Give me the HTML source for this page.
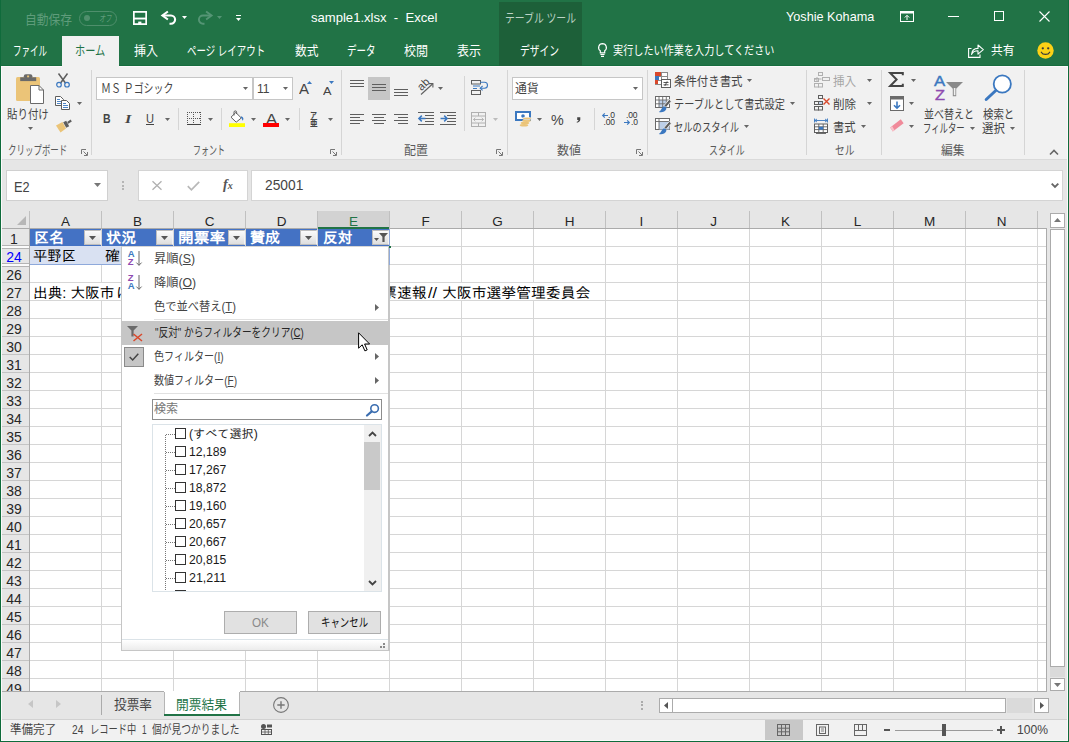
<!DOCTYPE html>
<html lang="ja"><head><meta charset="utf-8"><title>sample1.xlsx - Excel</title>
<style>
html,body{margin:0;padding:0}
body{width:1069px;height:742px;position:relative;overflow:hidden;background:#e6e6e6;font-family:'Liberation Sans','Noto Sans CJK JP',sans-serif;font-size:12px;color:#262626}
div{position:absolute;box-sizing:border-box;white-space:nowrap}
svg{position:absolute;overflow:visible}
u{text-decoration:underline;text-underline-offset:1px}
</style></head><body>

<div style="left:0px;top:0px;width:1069px;height:66px;background:#217346;"></div>
<div style="left:499px;top:2px;width:83px;height:64px;background:#1d6039;"></div>
<div style="left:24.5px;top:11.2px;color:#5f9c7b;font-size:13px;line-height:17px;transform-origin:0 0;transform:scaleX(0.9036);">自動保存</div>
<div style="left:79px;top:11px;width:38px;height:15px;border:1px solid #4f8f6c;border-radius:8px"></div>
<div style="left:84px;top:15px;width:6px;height:6px;background:#4f8f6c;border-radius:3px"></div>
<div style="left:98.5px;top:12.3px;color:#5f9c7b;font-size:10px;line-height:14px;font-style:italic;transform-origin:0 0;transform:scaleX(0.6250);">オフ</div>
<svg style="left:133px;top:11px" width="14" height="14" viewBox="0 0 14 14"><path d="M0.85 0.85H13.15V13.15H0.85Z" fill="none" stroke="#fff" stroke-width="1.7"/><rect x="1" y="6.6" width="12" height="1.9" fill="#fff"/><rect x="5.2" y="10.6" width="3.2" height="3" fill="#fff"/></svg>
<svg style="left:161px;top:11px" width="16" height="14" viewBox="0 0 16 14"><path d="M2 4.5H10A4.1 4.1 0 0 1 10 12.7H8.5" fill="none" stroke="#fff" stroke-width="2.1"/><path d="M6.9 0.5L1.4 4.5L6.9 8.5" fill="none" stroke="#fff" stroke-width="2.1"/></svg>
<svg style="left:182px;top:16px" width="5" height="3" viewBox="0 0 5 3"><path d="M0 0H5L2.5 3Z" fill="#fff"/></svg>
<svg style="left:196.5px;top:11px" width="16" height="14" viewBox="0 0 16 14"><path d="M14 4.5H6A4.1 4.1 0 0 0 6 12.7H7.5" fill="none" stroke="#559575" stroke-width="1.9"/><path d="M9.1 0.5L14.6 4.5L9.1 8.5" fill="none" stroke="#559575" stroke-width="1.9"/></svg>
<svg style="left:217px;top:16px" width="5" height="3" viewBox="0 0 5 3"><path d="M0 0H5L2.5 3Z" fill="#559575"/></svg>
<div style="left:236px;top:15px;width:5px;height:1px;background:#fff;"></div>
<svg style="left:236px;top:18px" width="5" height="3" viewBox="0 0 5 3"><path d="M0 0H5L2.5 3Z" fill="#fff"/></svg>
<div style="left:310.6px;top:9px;color:#fff;font-size:13px;line-height:17px;transform-origin:0 0;transform:scaleX(1.0055);">sample1.xlsx&nbsp; -&nbsp; Excel</div>
<div style="left:504.5px;top:11.25px;color:#bcd3c5;font-size:12.5px;line-height:16.5px;transform-origin:0 0;transform:scaleX(0.7868);">テーブル ツール</div>
<div style="left:785.7px;top:7.55px;color:#fff;font-size:13.5px;line-height:17.5px;transform-origin:0 0;transform:scaleX(0.9386);">Yoshie Kohama</div>
<svg style="left:899.5px;top:11px" width="14" height="11" viewBox="0 0 14 11"><rect x="0.5" y="0.5" width="13" height="10" fill="none" stroke="#fff"/><rect x="0.5" y="0.5" width="13" height="2" fill="#fff"/><path d="M7 4.5V9M4.8 6.5L7 4.3L9.2 6.5" fill="none" stroke="#fff"/></svg>
<div style="left:947.5px;top:16px;width:11px;height:1px;background:#fff;"></div>
<div style="left:994px;top:11px;width:10px;height:10px;border:1px solid #fff"></div>
<svg style="left:1039px;top:11px" width="11" height="11" viewBox="0 0 11 11"><path d="M0.5 0.5L10.5 10.5M10.5 0.5L0.5 10.5" stroke="#fff" stroke-width="1.1"/></svg>
<div style="left:62px;top:36px;width:57px;height:30px;background:#f1f1f1;"></div>
<div style="left:12.6px;top:42.1px;color:#fff;font-size:13px;line-height:17px;transform-origin:0 0;transform:scaleX(0.6556);">ファイル</div>
<div style="left:74.5px;top:42.1px;color:#217346;font-size:13px;line-height:17px;transform-origin:0 0;transform:scaleX(0.7845);">ホーム</div>
<div style="left:133.8px;top:42.1px;color:#fff;font-size:13px;line-height:17px;transform-origin:0 0;transform:scaleX(0.9225);">挿入</div>
<div style="left:186.9px;top:42.1px;color:#fff;font-size:13px;line-height:17px;transform-origin:0 0;transform:scaleX(0.7275);">ページ レイアウト</div>
<div style="left:294.5px;top:42.1px;color:#fff;font-size:13px;line-height:17px;transform-origin:0 0;transform:scaleX(0.9033);">数式</div>
<div style="left:346.5px;top:42.1px;color:#fff;font-size:13px;line-height:17px;transform-origin:0 0;transform:scaleX(0.7305);">データ</div>
<div style="left:404px;top:42.1px;color:#fff;font-size:13px;line-height:17px;transform-origin:0 0;transform:scaleX(0.9225);">校閲</div>
<div style="left:457px;top:42.1px;color:#fff;font-size:13px;line-height:17px;transform-origin:0 0;transform:scaleX(0.9225);">表示</div>
<div style="left:520px;top:42.1px;color:#fff;font-size:13px;line-height:17px;transform-origin:0 0;transform:scaleX(0.7498);">デザイン</div>
<svg style="left:597.5px;top:43px" width="9" height="14" viewBox="0 0 9 14"><path d="M4.5 0.6A3.9 3.9 0 0 0 2.3 7.7V9.8H6.7V7.7A3.9 3.9 0 0 0 4.5 0.6Z" fill="none" stroke="#fff" stroke-width="1.2"/><path d="M2.4 11.5H6.6M3 13.3H6" stroke="#fff" stroke-width="1.2"/></svg>
<div style="left:613px;top:43px;color:#fff;font-size:12px;line-height:16px;transform-origin:0 0;transform:scaleX(0.8442);">実行したい作業を入力してください</div>
<svg style="left:967.5px;top:43.5px" width="16" height="14" viewBox="0 0 16 14"><path d="M3.5 4.5H0.6V13.4H12V10.5" fill="none" stroke="#fff" stroke-width="1.1"/><path d="M3.5 10.5C3.8 6.5 6.5 4.4 10 4.4V1L15.3 5.6L10 10.2V6.8C7 6.8 4.8 7.8 3.5 10.5Z" fill="none" stroke="#fff" stroke-width="1.1" stroke-linejoin="round"/></svg>
<div style="left:991px;top:42.75px;color:#fff;font-size:12.5px;line-height:16.5px;transform-origin:0 0;transform:scaleX(0.9434);">共有</div>
<svg style="left:1036.5px;top:42px" width="17" height="17" viewBox="0 0 17 17"><circle cx="8.5" cy="8.5" r="8.2" fill="#fcd116"/><circle cx="5.8" cy="6.3" r="1.15" fill="#3a3a3a"/><circle cx="11.2" cy="6.3" r="1.15" fill="#3a3a3a"/><path d="M4.3 10.2C5.8 13.2 11.2 13.2 12.7 10.2" fill="none" stroke="#3a3a3a" stroke-width="1.2" stroke-linecap="round"/></svg>
<div style="left:1px;top:66px;width:1066px;height:93px;background:#f1f1f1;"></div>
<div style="left:1px;top:159px;width:1066px;height:1px;background:#dadada;"></div>
<div style="left:91.3px;top:70px;width:1px;height:85px;background:#d5d5d5;"></div>
<div style="left:341.3px;top:70px;width:1px;height:85px;background:#d5d5d5;"></div>
<div style="left:507.2px;top:70px;width:1px;height:85px;background:#d5d5d5;"></div>
<div style="left:647.3px;top:70px;width:1px;height:85px;background:#d5d5d5;"></div>
<div style="left:806.2px;top:70px;width:1px;height:85px;background:#d5d5d5;"></div>
<div style="left:881.3px;top:70px;width:1px;height:85px;background:#d5d5d5;"></div>
<div style="left:1023.8px;top:70px;width:1px;height:85px;background:#d5d5d5;"></div>
<div style="left:8px;top:143.45px;color:#5a5a5a;font-size:12.5px;line-height:16.5px;transform-origin:0 0;transform:scaleX(0.6776);">クリップボード</div>
<div style="left:192.7px;top:143.45px;color:#5a5a5a;font-size:12.5px;line-height:16.5px;transform-origin:0 0;transform:scaleX(0.6398);">フォント</div>
<div style="left:404px;top:143.45px;color:#5a5a5a;font-size:12.5px;line-height:16.5px;transform-origin:0 0;transform:scaleX(0.9594);">配置</div>
<div style="left:557px;top:143.45px;color:#5a5a5a;font-size:12.5px;line-height:16.5px;transform-origin:0 0;transform:scaleX(0.9594);">数値</div>
<div style="left:709px;top:143.45px;color:#5a5a5a;font-size:12.5px;line-height:16.5px;transform-origin:0 0;transform:scaleX(0.7138);">スタイル</div>
<div style="left:834.5px;top:143.45px;color:#5a5a5a;font-size:12.5px;line-height:16.5px;transform-origin:0 0;transform:scaleX(0.7795);">セル</div>
<div style="left:941px;top:143.45px;color:#5a5a5a;font-size:12.5px;line-height:16.5px;transform-origin:0 0;transform:scaleX(0.9434);">編集</div>
<svg style="left:80.5px;top:148.5px" width="7" height="7" viewBox="0 0 7 7"><path d="M0.5 5V0.5H5" fill="none" stroke="#777"/><path d="M2.5 2.5L6 6M6.5 3V6.5H3" fill="none" stroke="#777"/></svg>
<svg style="left:330px;top:148.5px" width="7" height="7" viewBox="0 0 7 7"><path d="M0.5 5V0.5H5" fill="none" stroke="#777"/><path d="M2.5 2.5L6 6M6.5 3V6.5H3" fill="none" stroke="#777"/></svg>
<svg style="left:496px;top:148.5px" width="7" height="7" viewBox="0 0 7 7"><path d="M0.5 5V0.5H5" fill="none" stroke="#777"/><path d="M2.5 2.5L6 6M6.5 3V6.5H3" fill="none" stroke="#777"/></svg>
<svg style="left:636px;top:148.5px" width="7" height="7" viewBox="0 0 7 7"><path d="M0.5 5V0.5H5" fill="none" stroke="#777"/><path d="M2.5 2.5L6 6M6.5 3V6.5H3" fill="none" stroke="#777"/></svg>
<svg style="left:1049px;top:148.5px" width="10" height="6" viewBox="0 0 10 6"><path d="M1 5.5L5 1.5L9 5.5" fill="none" stroke="#666" stroke-width="1.6"/></svg>
<svg style="left:16px;top:74px" width="28" height="30" viewBox="0 0 28 30"><rect x="0" y="3" width="24" height="24" rx="1.5" fill="#ebc478"/><rect x="4.2" y="3.3" width="16" height="3.8" fill="#6a6a6a"/><rect x="7.8" y="0.3" width="8.6" height="4" rx="2" fill="#6a6a6a"/><rect x="11.1" y="1.5" width="2" height="1.8" fill="#ebc478"/><path d="M14.5 11.5H23L27.5 16V29.5H14.5Z" fill="#fff" stroke="#6a6a6a"/><path d="M23 11.5V16H27.5" fill="none" stroke="#6a6a6a"/></svg>
<div style="left:7px;top:107.45px;color:#444;font-size:12.5px;line-height:16.5px;transform-origin:0 0;transform:scaleX(0.8357);">貼り付け</div>
<svg style="left:28px;top:127px" width="5" height="3" viewBox="0 0 5 3"><path d="M0 0H5L2.5 3Z" fill="#666"/></svg>
<svg style="left:56px;top:72.5px" width="14" height="15" viewBox="0 0 14 15"><path d="M2.5 0.5L9.6 10.2M11.5 0.5L4.4 10.2" stroke="#5e5e5e" stroke-width="1.5" fill="none"/><circle cx="3" cy="11.7" r="2.3" fill="none" stroke="#3b78c0" stroke-width="1.2"/><circle cx="11" cy="11.7" r="2.3" fill="none" stroke="#3b78c0" stroke-width="1.2"/></svg>
<svg style="left:55px;top:96px" width="15" height="14" viewBox="0 0 15 14"><path d="M0.5 0.5H5.5L8.5 3.5V9.5H0.5Z" fill="#fff" stroke="#5e5e5e"/><path d="M2 3.5H5M2 5.5H6.5M2 7.5H6.5" stroke="#3b78c0" stroke-width="0.9"/><path d="M6.5 4.5H11.5L14.5 7.5V13.5H6.5Z" fill="#fff" stroke="#5e5e5e"/><path d="M8 7.5H11M8 9.5H13M8 11.5H13" stroke="#3b78c0" stroke-width="0.9"/></svg>
<svg style="left:77px;top:102px" width="5" height="3" viewBox="0 0 5 3"><path d="M0 0H5L2.5 3Z" fill="#666"/></svg>
<svg style="left:56px;top:119px" width="16" height="14" viewBox="0 0 16 14"><path d="M0 6.5L6.5 3L10 9.5L4.5 13.5Z" fill="#ebc478"/><path d="M7.2 3.3L10.2 1.7L13.2 7.2L10.2 8.8Z" fill="#5e5e5e"/><path d="M11.2 3L14.6 0.6L15.8 2.4L12.3 4.8Z" fill="#5e5e5e"/></svg>
<div style="left:96px;top:77px;width:157px;height:23px;background:#fff;border:1px solid #c6c6c6"></div>
<div style="left:100.5px;top:81.45px;color:#444;font-size:12.5px;line-height:16.5px;transform-origin:0 0;transform:scaleX(0.7968);">ＭＳ Ｐゴシック</div>
<svg style="left:243px;top:87px" width="5" height="3" viewBox="0 0 5 3"><path d="M0 0H5L2.5 3Z" fill="#666"/></svg>
<div style="left:253px;top:77px;width:40px;height:23px;background:#fff;border:1px solid #c6c6c6"></div>
<div style="left:256.7px;top:81.45px;color:#444;font-size:12.5px;line-height:16.5px;transform-origin:0 0;transform:scaleX(0.9704);">11</div>
<svg style="left:283px;top:87px" width="5" height="3" viewBox="0 0 5 3"><path d="M0 0H5L2.5 3Z" fill="#666"/></svg>
<div style="left:299px;top:81.2px;color:#444;font-size:14.5px;line-height:16px;transform-origin:0 0;transform:scaleX(1.0339);">A</div>
<svg style="left:307px;top:81px" width="5" height="3" viewBox="0 0 5 3"><path d="M0 3H5L2.5 0Z" fill="#3b78c0"/></svg>
<div style="left:322.5px;top:83.7px;color:#444;font-size:11.5px;line-height:14px;transform-origin:0 0;transform:scaleX(1.1079);">A</div>
<svg style="left:329px;top:81px" width="5" height="3" viewBox="0 0 5 3"><path d="M0 0H5L2.5 3Z" fill="#3b78c0"/></svg>
<div style="left:102.7px;top:110.2px;color:#444;font-size:13px;line-height:17px;font-weight:bold;transform-origin:0 0;transform:scaleX(0.8093);">B</div>
<div style="left:125px;top:110.2px;color:#444;font-size:13px;line-height:17px;font-style:italic;font-family:'Liberation Serif',serif;font-weight:bold;transform-origin:0 0;transform:scaleX(1.2444);">I</div>
<div style="left:146px;top:110.95px;color:#444;font-size:12.5px;line-height:16.5px;transform-origin:0 0;transform:scaleX(0.8858);">U</div>
<div style="left:146px;top:124px;width:8px;height:1px;background:#444;"></div>
<svg style="left:165px;top:118px" width="5" height="3" viewBox="0 0 5 3"><path d="M0 0H5L2.5 3Z" fill="#666"/></svg>
<div style="left:178px;top:108px;width:1px;height:22px;background:#d5d5d5;"></div>
<svg style="left:187px;top:112px" width="14" height="13" viewBox="0 0 14 13"><g shape-rendering="crispEdges" stroke="#555" stroke-dasharray="1 1" fill="none"><path d="M0 0.5H14M0 6.5H14M0.5 0V11M6.5 0V11M13.5 0V11"/></g><path d="M0 12.5H14" stroke="#444" stroke-width="1" shape-rendering="crispEdges"/></svg>
<svg style="left:208px;top:118px" width="5" height="3" viewBox="0 0 5 3"><path d="M0 0H5L2.5 3Z" fill="#666"/></svg>
<div style="left:221px;top:108px;width:1px;height:22px;background:#d5d5d5;"></div>
<svg style="left:229px;top:111px" width="16" height="16" viewBox="0 0 16 16"><path d="M6.8 1.5L12.3 7L7.2 11.2L2 6.2Z" fill="#fff" stroke="#5e5e5e" stroke-width="1"/><path d="M5 4.5V1.2A1.3 1.3 0 0 1 7.6 1.2V3" fill="none" stroke="#5e5e5e" stroke-width="1"/><path d="M12.6 5.2C14.6 6.3 15 8.2 13.6 9.8C13 8.3 12.8 7.2 11.5 6.3Z" fill="#3b78c0"/><rect x="0" y="12.2" width="16" height="3.8" fill="#ffff00"/></svg>
<svg style="left:251px;top:118px" width="5" height="3" viewBox="0 0 5 3"><path d="M0 0H5L2.5 3Z" fill="#666"/></svg>
<div style="left:265.5px;top:110.7px;color:#444;font-size:14px;line-height:16px;transform-origin:0 0;transform:scaleX(1.1773);">A</div>
<div style="left:263px;top:123px;width:16px;height:4px;background:#ff0000;"></div>
<svg style="left:285px;top:118px" width="5" height="3" viewBox="0 0 5 3"><path d="M0 0H5L2.5 3Z" fill="#666"/></svg>
<div style="left:298.5px;top:108px;width:1px;height:22px;background:#d5d5d5;"></div>
<div style="left:310px;top:110.8px;color:#444;font-size:8.5px;line-height:8px;font-weight:bold;transform-origin:0 0;transform:scaleX(0.8220);">ア</div>
<div style="left:309.7px;top:118.8px;color:#444;font-size:8.5px;line-height:8px;font-weight:bold;transform-origin:0 0;transform:scaleX(0.8925);">亜</div>
<svg style="left:328px;top:118px" width="5" height="3" viewBox="0 0 5 3"><path d="M0 0H5L2.5 3Z" fill="#666"/></svg>
<div style="left:350px;top:80px;width:14px;height:1px;background:#5e5e5e;"></div>
<div style="left:350px;top:83px;width:14px;height:1px;background:#5e5e5e;"></div>
<div style="left:350px;top:86px;width:14px;height:1px;background:#5e5e5e;"></div>
<div style="left:368px;top:77px;width:22px;height:23px;background:#c6c6c6;"></div>
<div style="left:372px;top:84px;width:14px;height:1px;background:#5e5e5e;"></div>
<div style="left:372px;top:87px;width:14px;height:1px;background:#5e5e5e;"></div>
<div style="left:372px;top:90px;width:14px;height:1px;background:#5e5e5e;"></div>
<div style="left:394px;top:89px;width:14px;height:1px;background:#5e5e5e;"></div>
<div style="left:394px;top:92px;width:14px;height:1px;background:#5e5e5e;"></div>
<div style="left:394px;top:95px;width:14px;height:1px;background:#5e5e5e;"></div>
<svg style="left:418px;top:80px" width="17" height="15" viewBox="0 0 17 15"><path d="M3 14.5L14.5 4" stroke="#5e5e5e" stroke-width="1.1"/><path d="M11 3.6H14.9V7.5" fill="none" stroke="#5e5e5e" stroke-width="1.1"/></svg>
<div style="left:417px;top:78px;font-size:11px;line-height:12px;color:#444;transform:rotate(-45deg);transform-origin:50% 50%">ab</div>
<svg style="left:438px;top:87px" width="5" height="3" viewBox="0 0 5 3"><path d="M0 0H5L2.5 3Z" fill="#666"/></svg>
<div style="left:463.5px;top:76px;width:1px;height:55px;background:#d5d5d5;"></div>
<svg style="left:471px;top:80px" width="17" height="15" viewBox="0 0 17 15"><rect x="0.5" y="0.5" width="9" height="3.5" fill="none" stroke="#5e5e5e"/><rect x="0.5" y="10.5" width="9" height="4" fill="none" stroke="#5e5e5e"/><path d="M2 6H9M2 8.5H6" stroke="#3b78c0" stroke-width="1"/><path d="M9 2.2H13.5A2.6 2.6 0 0 1 13.5 8.2H9.5" fill="none" stroke="#3b78c0" stroke-width="1.1"/><path d="M11.6 6L9.2 8.2L11.6 10.4" fill="none" stroke="#3b78c0" stroke-width="1.1"/></svg>
<div style="left:350px;top:114px;width:14px;height:1px;background:#5e5e5e;"></div>
<div style="left:350px;top:117px;width:10px;height:1px;background:#5e5e5e;"></div>
<div style="left:350px;top:120px;width:14px;height:1px;background:#5e5e5e;"></div>
<div style="left:350px;top:123px;width:10px;height:1px;background:#5e5e5e;"></div>
<div style="left:372px;top:114px;width:14px;height:1px;background:#5e5e5e;"></div>
<div style="left:374px;top:117px;width:10px;height:1px;background:#5e5e5e;"></div>
<div style="left:372px;top:120px;width:14px;height:1px;background:#5e5e5e;"></div>
<div style="left:374px;top:123px;width:10px;height:1px;background:#5e5e5e;"></div>
<div style="left:394px;top:114px;width:14px;height:1px;background:#5e5e5e;"></div>
<div style="left:398px;top:117px;width:10px;height:1px;background:#5e5e5e;"></div>
<div style="left:394px;top:120px;width:14px;height:1px;background:#5e5e5e;"></div>
<div style="left:398px;top:123px;width:10px;height:1px;background:#5e5e5e;"></div>
<div style="left:418px;top:112px;width:16px;height:1px;background:#5e5e5e;"></div>
<div style="left:425px;top:115px;width:9px;height:1px;background:#5e5e5e;"></div>
<div style="left:425px;top:118px;width:9px;height:1px;background:#5e5e5e;"></div>
<div style="left:425px;top:121px;width:9px;height:1px;background:#5e5e5e;"></div>
<div style="left:418px;top:124px;width:16px;height:1px;background:#5e5e5e;"></div>
<svg style="left:418px;top:114.5px" width="8" height="7" viewBox="0 0 8 7"><path d="M7.5 3.5H1.2M3.8 0.6L0.9 3.5L3.8 6.4" fill="none" stroke="#3b78c0" stroke-width="1.5"/></svg>
<div style="left:440px;top:112px;width:16px;height:1px;background:#5e5e5e;"></div>
<div style="left:447px;top:115px;width:9px;height:1px;background:#5e5e5e;"></div>
<div style="left:447px;top:118px;width:9px;height:1px;background:#5e5e5e;"></div>
<div style="left:447px;top:121px;width:9px;height:1px;background:#5e5e5e;"></div>
<div style="left:440px;top:124px;width:16px;height:1px;background:#5e5e5e;"></div>
<svg style="left:439.5px;top:114.5px" width="8" height="7" viewBox="0 0 8 7"><path d="M0.5 3.5H6.8M4.2 0.6L7.1 3.5L4.2 6.4" fill="none" stroke="#3b78c0" stroke-width="1.5"/></svg>
<svg style="left:471px;top:111.5px" width="15" height="15" viewBox="0 0 15 15"><rect x="0.5" y="0.5" width="14" height="14" fill="none" stroke="#b0b0b0"/><path d="M0.5 4H14.5M0.5 11H14.5M7.5 0.5V4M7.5 11V14.5" stroke="#b0b0b0"/><path d="M2.5 7.5H12.5M4.3 5.8L2.5 7.5L4.3 9.2M10.7 5.8L12.5 7.5L10.7 9.2" fill="none" stroke="#b0b0b0" stroke-width="0.9"/></svg>
<svg style="left:493px;top:118px" width="5" height="3" viewBox="0 0 5 3"><path d="M0 0H5L2.5 3Z" fill="#bcbcbc"/></svg>
<div style="left:512px;top:77px;width:131px;height:23px;background:#fff;border:1px solid #c6c6c6"></div>
<div style="left:515px;top:81.45px;color:#444;font-size:12.5px;line-height:16.5px;transform-origin:0 0;transform:scaleX(0.9474);">通貨</div>
<svg style="left:633px;top:87px" width="5" height="3" viewBox="0 0 5 3"><path d="M0 0H5L2.5 3Z" fill="#666"/></svg>
<svg style="left:514.5px;top:111px" width="17" height="16" viewBox="0 0 17 16"><rect x="1" y="1" width="14" height="8" fill="#fff" stroke="#3b78c0" stroke-width="2"/><circle cx="8" cy="5" r="1.8" fill="#3b78c0"/><ellipse cx="9" cy="14.3" rx="4.3" ry="1.2" fill="#ebc478"/><ellipse cx="10" cy="12" rx="4.3" ry="1.2" fill="#ebc478"/><ellipse cx="11.5" cy="9.7" rx="4.3" ry="1.2" fill="#ebc478"/><ellipse cx="12" cy="7.5" rx="4.3" ry="1.2" fill="#ebc478" stroke="#f1f1f1" stroke-width="0.6"/></svg>
<svg style="left:537px;top:118px" width="5" height="3" viewBox="0 0 5 3"><path d="M0 0H5L2.5 3Z" fill="#666"/></svg>
<div style="left:551.3px;top:112.2px;color:#444;font-size:14.5px;line-height:16px;transform-origin:0 0;transform:scaleX(0.9840);">%</div>
<svg style="left:576px;top:116.5px" width="5" height="6" viewBox="0 0 5 6"><path d="M1.2 0.3H4.3V2.6C4.3 4.2 3 5.4 0.8 5.7V4.8C2 4.5 2.5 3.9 2.5 3H1.2Z" fill="#444"/></svg>
<div style="left:594px;top:108px;width:1px;height:22px;background:#d5d5d5;"></div>
<div style="left:608px;top:111px;font-size:8.5px;line-height:8px;color:#333;letter-spacing:-0.2px">.0</div>
<div style="left:603.5px;top:118px;font-size:8.5px;line-height:8px;color:#333;letter-spacing:-0.2px">.00</div>
<svg style="left:602px;top:113px" width="6" height="5" viewBox="0 0 6 5"><path d="M6 2.5H0.8M2.8 0.4L0.7 2.5L2.8 4.6" fill="none" stroke="#3b78c0" stroke-width="1.2"/></svg>
<div style="left:626px;top:111px;font-size:8.5px;line-height:8px;color:#333;letter-spacing:-0.2px">.00</div>
<div style="left:631px;top:118px;font-size:8.5px;line-height:8px;color:#333;letter-spacing:-0.2px">.0</div>
<svg style="left:624px;top:120px" width="6" height="5" viewBox="0 0 6 5"><path d="M0 2.5H5.2M3.2 0.4L5.3 2.5L3.2 4.6" fill="none" stroke="#3b78c0" stroke-width="1.2"/></svg>
<svg style="left:655px;top:72px" width="16" height="16" viewBox="0 0 16 16"><rect x="0.5" y="0.5" width="12" height="12" fill="#fff" stroke="#8a8a8a"/><path d="M0.5 4.5H12.5M0.5 8.5H12.5M6.5 0.5V12.5" stroke="#8a8a8a"/><rect x="0" y="0" width="6" height="4" fill="#d9482b"/><rect x="0" y="4" width="4" height="4" fill="#3b78c0"/><rect x="0" y="8" width="3" height="4" fill="#d9482b"/><rect x="6.5" y="7.5" width="9" height="8" fill="#fff" stroke="#5e5e5e"/><path d="M8.5 10.5H13.5M8.5 12.8H13.5M12.2 9.3L9.8 14" stroke="#444" stroke-width="0.9"/></svg>
<div style="left:674.2px;top:73.95px;color:#444;font-size:12.5px;line-height:16.5px;transform-origin:0 0;transform:scaleX(0.9131);">条件付き書式</div>
<svg style="left:747px;top:79px" width="5" height="3" viewBox="0 0 5 3"><path d="M0 0H5L2.5 3Z" fill="#666"/></svg>
<svg style="left:655px;top:95.5px" width="16" height="16" viewBox="0 0 16 16"><rect x="0.5" y="0.5" width="14" height="11" fill="#fff" stroke="#6a6a6a"/><rect x="4" y="4" width="7" height="7" fill="#bdd0e9"/><path d="M0.5 4H14.5M0.5 7.8H14.5M4 0.5V11.5M7.7 0.5V11.5M11.3 0.5V11.5" stroke="#6a6a6a" stroke-width="0.9"/><path d="M9 9.6L14.3 3.4L16.3 5.2L11 11.4Z" fill="#5e5e5e" stroke="#f1f1f1" stroke-width="0.8"/><path d="M3.8 15.9C6 15.2 6 12.3 8.2 10.7C10 9.7 12 11.3 11.2 13.3C10.2 15.9 6.6 16.7 3.8 15.9Z" fill="#3b78c0"/></svg>
<div style="left:674.2px;top:97.15px;color:#444;font-size:12.5px;line-height:16.5px;transform-origin:0 0;transform:scaleX(0.8124);">テーブルとして書式設定</div>
<svg style="left:790px;top:102px" width="5" height="3" viewBox="0 0 5 3"><path d="M0 0H5L2.5 3Z" fill="#666"/></svg>
<svg style="left:655px;top:118px" width="16" height="16" viewBox="0 0 16 16"><rect x="0.5" y="0.5" width="14" height="11" fill="#fff" stroke="#6a6a6a"/><rect x="4" y="3.5" width="10.5" height="8" fill="#bdd0e9"/><path d="M0.5 3.5H14.5M4 0.5V11.5" stroke="#6a6a6a" stroke-width="0.9"/><path d="M9 9.6L14.3 3.4L16.3 5.2L11 11.4Z" fill="#5e5e5e" stroke="#f1f1f1" stroke-width="0.8"/><path d="M3.8 15.9C6 15.2 6 12.3 8.2 10.7C10 9.7 12 11.3 11.2 13.3C10.2 15.9 6.6 16.7 3.8 15.9Z" fill="#3b78c0"/></svg>
<div style="left:674.2px;top:120.25px;color:#444;font-size:12.5px;line-height:16.5px;transform-origin:0 0;transform:scaleX(0.7439);">セルのスタイル</div>
<svg style="left:744px;top:125px" width="5" height="3" viewBox="0 0 5 3"><path d="M0 0H5L2.5 3Z" fill="#666"/></svg>
<svg style="left:814px;top:72px" width="16" height="16" viewBox="0 0 16 16"><rect x="4.5" y="0.5" width="4" height="3" fill="none" stroke="#b0b0b0"/><rect x="0.5" y="6.5" width="4" height="3" fill="none" stroke="#b0b0b0"/><rect x="0.5" y="11.5" width="4" height="3.5" fill="none" stroke="#b0b0b0"/><rect x="4.5" y="11.5" width="4" height="3.5" fill="none" stroke="#b0b0b0"/><rect x="8.5" y="5.5" width="7" height="3" fill="none" stroke="#b0b0b0"/><path d="M7.5 7H1.5M3.5 5L1.5 7L3.5 9" fill="none" stroke="#b0b0b0"/></svg>
<div style="left:833.3px;top:73.95px;color:#a6a6a6;font-size:12.5px;line-height:16.5px;transform-origin:0 0;transform:scaleX(0.9234);">挿入</div>
<svg style="left:867px;top:79px" width="5" height="3" viewBox="0 0 5 3"><path d="M0 0H5L2.5 3Z" fill="#666"/></svg>
<svg style="left:814px;top:95px" width="16" height="16" viewBox="0 0 16 16"><rect x="4.5" y="0.5" width="4" height="3" fill="none" stroke="#5e5e5e"/><rect x="0.5" y="6.5" width="4" height="3" fill="none" stroke="#5e5e5e"/><rect x="0.5" y="11.5" width="4" height="3.5" fill="none" stroke="#5e5e5e"/><rect x="4.5" y="11.5" width="4" height="3.5" fill="none" stroke="#5e5e5e"/><rect x="4.5" y="6.5" width="4" height="3" fill="#bdd0e9" stroke="#5e5e5e"/><path d="M9.5 3.5L15.5 9.5M15.5 3.5L9.5 9.5" stroke="#d9482b" stroke-width="1.4"/></svg>
<div style="left:833.3px;top:97.15px;color:#444;font-size:12.5px;line-height:16.5px;transform-origin:0 0;transform:scaleX(0.9234);">削除</div>
<svg style="left:867px;top:102px" width="5" height="3" viewBox="0 0 5 3"><path d="M0 0H5L2.5 3Z" fill="#666"/></svg>
<svg style="left:814px;top:118px" width="15" height="16" viewBox="0 0 15 16"><path d="M0.5 2.5H13.5M0.5 0.5V4.5M13.5 0.5V4.5M3 1L0.8 2.5L3 4M11 1L13.2 2.5L11 4" fill="none" stroke="#3b78c0" stroke-width="0.9"/><rect x="0.5" y="6" width="13" height="8.5" fill="#fff" stroke="#5e5e5e"/><path d="M0.5 8.8H13.5M0.5 11.6H13.5M4.8 6V14.5M9.2 6V14.5M2 15.5H12" stroke="#5e5e5e" stroke-width="0.9"/><rect x="4.8" y="8.8" width="4.4" height="2.8" fill="#3b78c0"/></svg>
<div style="left:833.3px;top:120.25px;color:#444;font-size:12.5px;line-height:16.5px;transform-origin:0 0;transform:scaleX(0.9074);">書式</div>
<svg style="left:861px;top:125px" width="5" height="3" viewBox="0 0 5 3"><path d="M0 0H5L2.5 3Z" fill="#666"/></svg>
<svg style="left:889px;top:72px" width="15" height="15" viewBox="0 0 15 15"><path d="M13.8 3.2V1H1.2L7.6 7.5L1.2 14H13.8V11.8" fill="none" stroke="#444" stroke-width="2" stroke-linejoin="miter"/></svg>
<svg style="left:911px;top:79px" width="5" height="3" viewBox="0 0 5 3"><path d="M0 0H5L2.5 3Z" fill="#666"/></svg>
<svg style="left:890px;top:95.5px" width="14" height="15" viewBox="0 0 14 15"><rect x="0.5" y="0.5" width="13" height="14" fill="#fff" stroke="#6a6a6a"/><rect x="0.5" y="0.5" width="13" height="3" fill="#6a6a6a"/><path d="M7 5.5V12M4 9.2L7 12.2L10 9.2" fill="none" stroke="#3b78c0" stroke-width="1.6"/></svg>
<svg style="left:909px;top:102px" width="5" height="3" viewBox="0 0 5 3"><path d="M0 0H5L2.5 3Z" fill="#666"/></svg>
<svg style="left:890px;top:119px" width="14" height="13" viewBox="0 0 14 13"><path d="M0.2 8.4L2.8 12.6L13.6 4.2L10.8 0.2Z" fill="#f08a9a"/><path d="M0.2 8.4L2.8 12.6L4.6 11.2L2 7Z" fill="#f8c3cb"/></svg>
<svg style="left:909px;top:125px" width="5" height="3" viewBox="0 0 5 3"><path d="M0 0H5L2.5 3Z" fill="#666"/></svg>
<div style="left:934.3px;top:72.5px;color:#3b78c0;font-size:15px;line-height:16px;-webkit-text-stroke:0.4px #3b78c0;transform-origin:0 0;transform:scaleX(1.1183);">A</div>
<div style="left:935px;top:86.9px;color:#8e4ab0;font-size:15px;line-height:16px;-webkit-text-stroke:0.4px #8e4ab0;transform-origin:0 0;transform:scaleX(1.0903);">Z</div>
<svg style="left:946px;top:82px" width="17" height="15" viewBox="0 0 17 15"><path d="M0 0H17L10.2 6.8V14.2H6.8V6.8Z" fill="#8a8a8a"/><rect x="7.8" y="6" width="1.6" height="7.2" fill="#f1f1f1"/></svg>
<div style="left:924.2px;top:107.45px;color:#444;font-size:12.5px;line-height:16.5px;transform-origin:0 0;transform:scaleX(0.7998);">並べ替えと</div>
<div style="left:922.9px;top:121.45px;color:#444;font-size:12.5px;line-height:16.5px;transform-origin:0 0;transform:scaleX(0.6697);">フィルター</div>
<svg style="left:970px;top:126.5px" width="5" height="3" viewBox="0 0 5 3"><path d="M0 0H5L2.5 3Z" fill="#666"/></svg>
<svg style="left:984px;top:73px" width="30" height="30" viewBox="0 0 30 30"><circle cx="18.3" cy="11" r="8.6" fill="#fff" stroke="#3b78c0" stroke-width="1.8"/><path d="M11.8 17.5L2.2 26.5" stroke="#3b78c0" stroke-width="3" stroke-linecap="round"/></svg>
<div style="left:983.3px;top:107.45px;color:#444;font-size:12.5px;line-height:16.5px;transform-origin:0 0;transform:scaleX(0.8343);">検索と</div>
<div style="left:982.2px;top:121.45px;color:#444;font-size:12.5px;line-height:16.5px;transform-origin:0 0;transform:scaleX(0.9114);">選択</div>
<svg style="left:1010px;top:126.5px" width="5" height="3" viewBox="0 0 5 3"><path d="M0 0H5L2.5 3Z" fill="#666"/></svg>
<div style="left:6px;top:170px;width:102px;height:31px;background:#fff;border:1px solid #d0d0d0"></div>
<div style="left:14px;top:177.75px;color:#444;font-size:14.5px;line-height:18.5px;transform-origin:0 0;transform:scaleX(0.8789);">E2</div>
<svg style="left:94px;top:183px" width="7" height="4" viewBox="0 0 7 4"><path d="M0 0H7L3.5 4Z" fill="#777"/></svg>
<div style="left:122px;top:181px;width:2px;height:2px;background:#b5b5b5;"></div>
<div style="left:122px;top:184.5px;width:2px;height:2px;background:#b5b5b5;"></div>
<div style="left:122px;top:188px;width:2px;height:2px;background:#b5b5b5;"></div>
<div style="left:138px;top:170px;width:110px;height:31px;background:#fff;border:1px solid #d4d4d4"></div>
<svg style="left:152px;top:181px" width="10" height="9" viewBox="0 0 10 9"><path d="M0.5 0.3L9.5 8.7M9.5 0.3L0.5 8.7" stroke="#b0b0b0" stroke-width="1.3"/></svg>
<svg style="left:187px;top:180.5px" width="13" height="10" viewBox="0 0 13 10"><path d="M0.8 5.2L4.4 8.8L12.2 0.8" fill="none" stroke="#b8b8b8" stroke-width="1.7"/></svg>
<div style="left:223px;top:176px;font-family:'Liberation Serif',serif;font-style:italic;font-size:14px;line-height:18px;color:#555;font-weight:bold"><i>f</i><span style="position:static;font-size:10px">x</span></div>
<div style="left:251px;top:170px;width:812px;height:31px;background:#fff;border:1px solid #d4d4d4"></div>
<div style="left:264.7px;top:176px;color:#444;font-size:14px;line-height:18px;transform-origin:0 0;transform:scaleX(0.9836);">25001</div>
<svg style="left:1050.5px;top:182.5px" width="8" height="5" viewBox="0 0 8 5"><path d="M0.7 0.7L4 4L7.3 0.7" fill="none" stroke="#666" stroke-width="1.9"/></svg>
<div style="left:30px;top:229px;width:1016px;height:462px;background:#fff;"></div>
<div style="left:30px;top:229px;width:359px;height:16.5px;background:#4472c4;"></div>
<div style="left:317px;top:211px;width:73px;height:16px;background:#d2d2d2;"></div>
<div style="left:317px;top:227px;width:73px;height:2px;background:#217346;"></div>
<div style="left:30px;top:213px;width:71px;height:16px;text-align:center;font-size:13.5px;line-height:17px;color:#262626">A</div>
<div style="left:102px;top:213px;width:71px;height:16px;text-align:center;font-size:13.5px;line-height:17px;color:#262626">B</div>
<div style="left:174px;top:213px;width:71px;height:16px;text-align:center;font-size:13.5px;line-height:17px;color:#262626">C</div>
<div style="left:246px;top:213px;width:71px;height:16px;text-align:center;font-size:13.5px;line-height:17px;color:#262626">D</div>
<div style="left:318px;top:213px;width:71px;height:16px;text-align:center;font-size:13.5px;line-height:17px;color:#217346">E</div>
<div style="left:390px;top:213px;width:71px;height:16px;text-align:center;font-size:13.5px;line-height:17px;color:#262626">F</div>
<div style="left:462px;top:213px;width:71px;height:16px;text-align:center;font-size:13.5px;line-height:17px;color:#262626">G</div>
<div style="left:534px;top:213px;width:71px;height:16px;text-align:center;font-size:13.5px;line-height:17px;color:#262626">H</div>
<div style="left:606px;top:213px;width:71px;height:16px;text-align:center;font-size:13.5px;line-height:17px;color:#262626">I</div>
<div style="left:678px;top:213px;width:71px;height:16px;text-align:center;font-size:13.5px;line-height:17px;color:#262626">J</div>
<div style="left:750px;top:213px;width:71px;height:16px;text-align:center;font-size:13.5px;line-height:17px;color:#262626">K</div>
<div style="left:822px;top:213px;width:71px;height:16px;text-align:center;font-size:13.5px;line-height:17px;color:#262626">L</div>
<div style="left:894px;top:213px;width:71px;height:16px;text-align:center;font-size:13.5px;line-height:17px;color:#262626">M</div>
<div style="left:966px;top:213px;width:71px;height:16px;text-align:center;font-size:13.5px;line-height:17px;color:#262626">N</div>
<svg style="left:16.5px;top:215.5px" width="9" height="9" viewBox="0 0 9 9"><path d="M9 0V9H0Z" fill="#b7b7b7"/></svg>
<div style="left:29px;top:211px;width:1px;height:18px;background:#c0c0c0;"></div>
<div style="left:101px;top:211px;width:1px;height:18px;background:#c0c0c0;"></div>
<div style="left:101px;top:229px;width:1px;height:462px;background:#d6d6d6;"></div>
<div style="left:173px;top:211px;width:1px;height:18px;background:#c0c0c0;"></div>
<div style="left:173px;top:229px;width:1px;height:462px;background:#d6d6d6;"></div>
<div style="left:245px;top:211px;width:1px;height:18px;background:#c0c0c0;"></div>
<div style="left:245px;top:229px;width:1px;height:462px;background:#d6d6d6;"></div>
<div style="left:317px;top:211px;width:1px;height:18px;background:#c0c0c0;"></div>
<div style="left:317px;top:229px;width:1px;height:462px;background:#d6d6d6;"></div>
<div style="left:389px;top:211px;width:1px;height:18px;background:#c0c0c0;"></div>
<div style="left:389px;top:229px;width:1px;height:462px;background:#d6d6d6;"></div>
<div style="left:461px;top:211px;width:1px;height:18px;background:#c0c0c0;"></div>
<div style="left:461px;top:229px;width:1px;height:462px;background:#d6d6d6;"></div>
<div style="left:533px;top:211px;width:1px;height:18px;background:#c0c0c0;"></div>
<div style="left:533px;top:229px;width:1px;height:462px;background:#d6d6d6;"></div>
<div style="left:605px;top:211px;width:1px;height:18px;background:#c0c0c0;"></div>
<div style="left:605px;top:229px;width:1px;height:462px;background:#d6d6d6;"></div>
<div style="left:677px;top:211px;width:1px;height:18px;background:#c0c0c0;"></div>
<div style="left:677px;top:229px;width:1px;height:462px;background:#d6d6d6;"></div>
<div style="left:749px;top:211px;width:1px;height:18px;background:#c0c0c0;"></div>
<div style="left:749px;top:229px;width:1px;height:462px;background:#d6d6d6;"></div>
<div style="left:821px;top:211px;width:1px;height:18px;background:#c0c0c0;"></div>
<div style="left:821px;top:229px;width:1px;height:462px;background:#d6d6d6;"></div>
<div style="left:893px;top:211px;width:1px;height:18px;background:#c0c0c0;"></div>
<div style="left:893px;top:229px;width:1px;height:462px;background:#d6d6d6;"></div>
<div style="left:965px;top:211px;width:1px;height:18px;background:#c0c0c0;"></div>
<div style="left:965px;top:229px;width:1px;height:462px;background:#d6d6d6;"></div>
<div style="left:1037px;top:211px;width:1px;height:18px;background:#c0c0c0;"></div>
<div style="left:1037px;top:229px;width:1px;height:462px;background:#d6d6d6;"></div>
<div style="left:1px;top:228px;width:316px;height:1px;background:#ababab;"></div>
<div style="left:390px;top:228px;width:657px;height:1px;background:#ababab;"></div>
<div style="left:1046px;top:228px;width:1px;height:463px;background:#ababab;"></div>
<div style="left:29px;top:229px;width:1px;height:462px;background:#ababab;"></div>
<div style="left:0px;top:230px;width:28px;height:17px;text-align:center;font-size:14px;line-height:18px;color:#262626">1</div>
<div style="left:1px;top:246px;width:28px;height:1px;background:#c4c4c4;"></div>
<div style="left:30px;top:246px;width:1016px;height:1px;background:#d6d6d6;"></div>
<div style="left:0px;top:248px;width:28px;height:17px;text-align:center;font-size:14px;line-height:18px;color:#0000ff">24</div>
<div style="left:1px;top:264px;width:28px;height:1px;background:#c4c4c4;"></div>
<div style="left:30px;top:264px;width:1016px;height:1px;background:#d6d6d6;"></div>
<div style="left:0px;top:266px;width:28px;height:17px;text-align:center;font-size:14px;line-height:18px;color:#262626">26</div>
<div style="left:1px;top:282px;width:28px;height:1px;background:#c4c4c4;"></div>
<div style="left:30px;top:282px;width:1016px;height:1px;background:#d6d6d6;"></div>
<div style="left:0px;top:284px;width:28px;height:17px;text-align:center;font-size:14px;line-height:18px;color:#262626">27</div>
<div style="left:1px;top:300px;width:28px;height:1px;background:#c4c4c4;"></div>
<div style="left:30px;top:300px;width:1016px;height:1px;background:#d6d6d6;"></div>
<div style="left:0px;top:302px;width:28px;height:17px;text-align:center;font-size:14px;line-height:18px;color:#262626">28</div>
<div style="left:1px;top:318px;width:28px;height:1px;background:#c4c4c4;"></div>
<div style="left:30px;top:318px;width:1016px;height:1px;background:#d6d6d6;"></div>
<div style="left:0px;top:320px;width:28px;height:17px;text-align:center;font-size:14px;line-height:18px;color:#262626">29</div>
<div style="left:1px;top:336px;width:28px;height:1px;background:#c4c4c4;"></div>
<div style="left:30px;top:336px;width:1016px;height:1px;background:#d6d6d6;"></div>
<div style="left:0px;top:338px;width:28px;height:17px;text-align:center;font-size:14px;line-height:18px;color:#262626">30</div>
<div style="left:1px;top:354px;width:28px;height:1px;background:#c4c4c4;"></div>
<div style="left:30px;top:354px;width:1016px;height:1px;background:#d6d6d6;"></div>
<div style="left:0px;top:356px;width:28px;height:17px;text-align:center;font-size:14px;line-height:18px;color:#262626">31</div>
<div style="left:1px;top:372px;width:28px;height:1px;background:#c4c4c4;"></div>
<div style="left:30px;top:372px;width:1016px;height:1px;background:#d6d6d6;"></div>
<div style="left:0px;top:374px;width:28px;height:17px;text-align:center;font-size:14px;line-height:18px;color:#262626">32</div>
<div style="left:1px;top:390px;width:28px;height:1px;background:#c4c4c4;"></div>
<div style="left:30px;top:390px;width:1016px;height:1px;background:#d6d6d6;"></div>
<div style="left:0px;top:392px;width:28px;height:17px;text-align:center;font-size:14px;line-height:18px;color:#262626">33</div>
<div style="left:1px;top:408px;width:28px;height:1px;background:#c4c4c4;"></div>
<div style="left:30px;top:408px;width:1016px;height:1px;background:#d6d6d6;"></div>
<div style="left:0px;top:410px;width:28px;height:17px;text-align:center;font-size:14px;line-height:18px;color:#262626">34</div>
<div style="left:1px;top:426px;width:28px;height:1px;background:#c4c4c4;"></div>
<div style="left:30px;top:426px;width:1016px;height:1px;background:#d6d6d6;"></div>
<div style="left:0px;top:428px;width:28px;height:17px;text-align:center;font-size:14px;line-height:18px;color:#262626">35</div>
<div style="left:1px;top:444px;width:28px;height:1px;background:#c4c4c4;"></div>
<div style="left:30px;top:444px;width:1016px;height:1px;background:#d6d6d6;"></div>
<div style="left:0px;top:446px;width:28px;height:17px;text-align:center;font-size:14px;line-height:18px;color:#262626">36</div>
<div style="left:1px;top:462px;width:28px;height:1px;background:#c4c4c4;"></div>
<div style="left:30px;top:462px;width:1016px;height:1px;background:#d6d6d6;"></div>
<div style="left:0px;top:464px;width:28px;height:17px;text-align:center;font-size:14px;line-height:18px;color:#262626">37</div>
<div style="left:1px;top:480px;width:28px;height:1px;background:#c4c4c4;"></div>
<div style="left:30px;top:480px;width:1016px;height:1px;background:#d6d6d6;"></div>
<div style="left:0px;top:482px;width:28px;height:17px;text-align:center;font-size:14px;line-height:18px;color:#262626">38</div>
<div style="left:1px;top:498px;width:28px;height:1px;background:#c4c4c4;"></div>
<div style="left:30px;top:498px;width:1016px;height:1px;background:#d6d6d6;"></div>
<div style="left:0px;top:500px;width:28px;height:17px;text-align:center;font-size:14px;line-height:18px;color:#262626">39</div>
<div style="left:1px;top:516px;width:28px;height:1px;background:#c4c4c4;"></div>
<div style="left:30px;top:516px;width:1016px;height:1px;background:#d6d6d6;"></div>
<div style="left:0px;top:518px;width:28px;height:17px;text-align:center;font-size:14px;line-height:18px;color:#262626">40</div>
<div style="left:1px;top:534px;width:28px;height:1px;background:#c4c4c4;"></div>
<div style="left:30px;top:534px;width:1016px;height:1px;background:#d6d6d6;"></div>
<div style="left:0px;top:536px;width:28px;height:17px;text-align:center;font-size:14px;line-height:18px;color:#262626">41</div>
<div style="left:1px;top:552px;width:28px;height:1px;background:#c4c4c4;"></div>
<div style="left:30px;top:552px;width:1016px;height:1px;background:#d6d6d6;"></div>
<div style="left:0px;top:554px;width:28px;height:17px;text-align:center;font-size:14px;line-height:18px;color:#262626">42</div>
<div style="left:1px;top:570px;width:28px;height:1px;background:#c4c4c4;"></div>
<div style="left:30px;top:570px;width:1016px;height:1px;background:#d6d6d6;"></div>
<div style="left:0px;top:572px;width:28px;height:17px;text-align:center;font-size:14px;line-height:18px;color:#262626">43</div>
<div style="left:1px;top:588px;width:28px;height:1px;background:#c4c4c4;"></div>
<div style="left:30px;top:588px;width:1016px;height:1px;background:#d6d6d6;"></div>
<div style="left:0px;top:590px;width:28px;height:17px;text-align:center;font-size:14px;line-height:18px;color:#262626">44</div>
<div style="left:1px;top:606px;width:28px;height:1px;background:#c4c4c4;"></div>
<div style="left:30px;top:606px;width:1016px;height:1px;background:#d6d6d6;"></div>
<div style="left:0px;top:608px;width:28px;height:17px;text-align:center;font-size:14px;line-height:18px;color:#262626">45</div>
<div style="left:1px;top:624px;width:28px;height:1px;background:#c4c4c4;"></div>
<div style="left:30px;top:624px;width:1016px;height:1px;background:#d6d6d6;"></div>
<div style="left:0px;top:626px;width:28px;height:17px;text-align:center;font-size:14px;line-height:18px;color:#262626">46</div>
<div style="left:1px;top:642px;width:28px;height:1px;background:#c4c4c4;"></div>
<div style="left:30px;top:642px;width:1016px;height:1px;background:#d6d6d6;"></div>
<div style="left:0px;top:644px;width:28px;height:17px;text-align:center;font-size:14px;line-height:18px;color:#262626">47</div>
<div style="left:1px;top:660px;width:28px;height:1px;background:#c4c4c4;"></div>
<div style="left:30px;top:660px;width:1016px;height:1px;background:#d6d6d6;"></div>
<div style="left:0px;top:662px;width:28px;height:17px;text-align:center;font-size:14px;line-height:18px;color:#262626">48</div>
<div style="left:1px;top:678px;width:28px;height:1px;background:#c4c4c4;"></div>
<div style="left:30px;top:678px;width:1016px;height:1px;background:#d6d6d6;"></div>
<div style="left:0px;top:680px;width:28px;height:17px;text-align:center;font-size:14px;line-height:18px;color:#262626">49</div>
<div style="left:1px;top:696px;width:28px;height:1px;background:#c4c4c4;"></div>
<div style="left:30px;top:696px;width:1016px;height:1px;background:#d6d6d6;"></div>
<div style="left:30px;top:246px;width:359px;height:18px;background:#d9e1f2;"></div>
<div style="left:30px;top:264px;width:359px;height:1px;background:#8ea9db;"></div>
<div style="left:30px;top:283px;width:565px;height:17px;background:#fff;"></div>
<div style="left:1px;top:245px;width:28px;height:1px;background:#b4b4b4;"></div>
<div style="left:1px;top:246px;width:28px;height:2px;background:#fbfbfb;"></div>
<div style="left:1px;top:248px;width:28px;height:1px;background:#b4b4b4;"></div>
<div style="left:1px;top:263px;width:28px;height:1px;background:#b4b4b4;"></div>
<div style="left:1px;top:264px;width:28px;height:2px;background:#fbfbfb;"></div>
<div style="left:1px;top:266px;width:28px;height:1px;background:#b4b4b4;"></div>
<div style="left:34px;top:230.3px;color:#fff;font-size:15px;line-height:16px;font-family:'Liberation Sans','IPAGothic','Noto Sans CJK JP',sans-serif;font-weight:bold;transform-origin:0 0;transform:scaleX(1.0000);">区名</div>
<div style="left:106px;top:230.3px;color:#fff;font-size:15px;line-height:16px;font-family:'Liberation Sans','IPAGothic','Noto Sans CJK JP',sans-serif;font-weight:bold;transform-origin:0 0;transform:scaleX(1.0100);">状況</div>
<div style="left:177.8px;top:230.3px;color:#fff;font-size:15px;line-height:16px;font-family:'Liberation Sans','IPAGothic','Noto Sans CJK JP',sans-serif;font-weight:bold;transform-origin:0 0;transform:scaleX(1.0489);">開票率</div>
<div style="left:250.3px;top:230.3px;color:#fff;font-size:15px;line-height:16px;font-family:'Liberation Sans','IPAGothic','Noto Sans CJK JP',sans-serif;font-weight:bold;transform-origin:0 0;transform:scaleX(1.0033);">賛成</div>
<div style="left:322.7px;top:230.3px;color:#fff;font-size:15px;line-height:16px;font-family:'Liberation Sans','IPAGothic','Noto Sans CJK JP',sans-serif;font-weight:bold;transform-origin:0 0;transform:scaleX(0.9767);">反対</div>
<div style="left:84px;top:230px;width:17px;height:15px;background:#e9e9e9;border:1px solid #bdbdbd;border-right-color:#f4f4f4;background:linear-gradient(#fbfbfb,#dedede)"></div>
<svg style="left:89px;top:236px" width="7" height="4" viewBox="0 0 7 4"><path d="M0 0H7L3.5 4Z" fill="#555"/></svg>
<div style="left:156px;top:230px;width:17px;height:15px;background:#e9e9e9;border:1px solid #bdbdbd;border-right-color:#f4f4f4;background:linear-gradient(#fbfbfb,#dedede)"></div>
<svg style="left:161px;top:236px" width="7" height="4" viewBox="0 0 7 4"><path d="M0 0H7L3.5 4Z" fill="#555"/></svg>
<div style="left:228px;top:230px;width:17px;height:15px;background:#e9e9e9;border:1px solid #bdbdbd;border-right-color:#f4f4f4;background:linear-gradient(#fbfbfb,#dedede)"></div>
<svg style="left:233px;top:236px" width="7" height="4" viewBox="0 0 7 4"><path d="M0 0H7L3.5 4Z" fill="#555"/></svg>
<div style="left:300px;top:230px;width:17px;height:15px;background:#e9e9e9;border:1px solid #bdbdbd;border-right-color:#f4f4f4;background:linear-gradient(#fbfbfb,#dedede)"></div>
<svg style="left:305px;top:236px" width="7" height="4" viewBox="0 0 7 4"><path d="M0 0H7L3.5 4Z" fill="#555"/></svg>
<div style="left:372px;top:230px;width:17px;height:15px;background:#e9e9e9;border:1px solid #bdbdbd;border-right-color:#f4f4f4;background:linear-gradient(#fbfbfb,#dedede)"></div>
<svg style="left:374px;top:238px" width="5" height="3" viewBox="0 0 5 3"><path d="M0 0H5L2.5 3Z" fill="#555"/></svg>
<svg style="left:378.5px;top:232.5px" width="9" height="9" viewBox="0 0 9 9"><path d="M0 0H9L5.6 3.8V9H3.4V3.8Z" fill="#555"/></svg>
<div style="left:33px;top:248px;color:#000;font-size:14.67px;line-height:16px;font-family:'Liberation Sans','IPAGothic','Noto Sans CJK JP',sans-serif;transform-origin:0 0;transform:scaleX(0.9780);">平野区</div>
<div style="left:105px;top:248px;color:#000;font-size:14.67px;line-height:16px;font-family:'Liberation Sans','IPAGothic','Noto Sans CJK JP',sans-serif;transform-origin:0 0;transform:scaleX(1.0235);">確定</div>
<div style="left:33.4px;top:284.5px;color:#000;font-size:14.67px;line-height:16px;font-family:'Liberation Sans','IPAGothic','Noto Sans CJK JP',sans-serif;transform-origin:0 0;transform:scaleX(0.9995);">出典:&nbsp;大阪市</div>
<div style="left:116.3px;top:284.5px;color:#000;font-size:14.67px;line-height:16px;font-family:'Liberation Sans','IPAGothic','Noto Sans CJK JP',sans-serif;transform-origin:0 0;transform:scaleX(0.9929);">における特別区の設置についての投票 開</div>
<div style="left:382.3px;top:284.5px;color:#000;font-size:14.67px;line-height:16px;font-family:'Liberation Sans','IPAGothic','Noto Sans CJK JP',sans-serif;transform-origin:0 0;transform:scaleX(1.0166);">票速報</div>
<div style="left:428px;top:284.5px;color:#000;font-size:14.67px;line-height:16px;font-family:'Liberation Sans','IPAGothic','Noto Sans CJK JP',sans-serif;transform-origin:0 0;transform:scaleX(1.1034);">//</div>
<div style="left:441.7px;top:284.5px;color:#000;font-size:14.67px;line-height:16px;font-family:'Liberation Sans','IPAGothic','Noto Sans CJK JP',sans-serif;transform-origin:0 0;transform:scaleX(1.0119);">大阪市選挙管理委員会</div>
<div style="left:1050px;top:213px;width:15px;height:15px;background:#fff;border:1px solid #ababab"></div>
<svg style="left:1054px;top:218px" width="7" height="4" viewBox="0 0 7 4"><path d="M0 4H7L3.5 0Z" fill="#777"/></svg>
<div style="left:1050px;top:229px;width:15px;height:438px;background:#fff;border:1px solid #ababab"></div>
<div style="left:1050px;top:667px;width:15px;height:10px;background:#dadada;"></div>
<div style="left:1050px;top:677.5px;width:15px;height:13.5px;background:#fff;border:1px solid #ababab"></div>
<svg style="left:1054px;top:683px" width="7" height="4" viewBox="0 0 7 4"><path d="M0 0H7L3.5 4Z" fill="#777"/></svg>
<div style="left:1px;top:691px;width:1066px;height:28px;background:#e6e6e6;"></div>
<div style="left:1px;top:719px;width:1066px;height:1px;background:#d2d2d2;"></div>
<div style="left:1px;top:691px;width:1046px;height:1px;background:#ababab;"></div>
<svg style="left:28px;top:700px" width="5" height="8" viewBox="0 0 5 8"><path d="M5 0V8L0 4Z" fill="#c6c6c6"/></svg>
<svg style="left:56px;top:700px" width="5" height="8" viewBox="0 0 5 8"><path d="M0 0V8L5 4Z" fill="#c6c6c6"/></svg>
<div style="left:101px;top:695px;width:1px;height:20px;background:#ababab;"></div>
<div style="left:113.7px;top:696px;color:#444;font-size:13px;line-height:17px;transform-origin:0 0;transform:scaleX(0.9714);">投票率</div>
<div style="left:164px;top:691px;width:76px;height:25px;background:#fff;"></div>
<div style="left:164px;top:714px;width:76px;height:2px;background:#217346;"></div>
<div style="left:164px;top:692px;width:1px;height:22px;background:#b5b5b5;"></div>
<div style="left:239px;top:692px;width:1px;height:22px;background:#b5b5b5;"></div>
<div style="left:176.3px;top:696px;color:#217346;font-size:13px;line-height:17px;transform-origin:0 0;transform:scaleX(0.9805);">開票結果</div>
<svg style="left:272.5px;top:696.5px" width="16" height="16" viewBox="0 0 16 16"><circle cx="8" cy="8" r="7.4" fill="none" stroke="#777" stroke-width="1.1"/><path d="M8 4.3V11.7M4.3 8H11.7" stroke="#777" stroke-width="1.4"/></svg>
<div style="left:641px;top:700.5px;width:2px;height:2px;background:#ababab;"></div>
<div style="left:641px;top:704px;width:2px;height:2px;background:#ababab;"></div>
<div style="left:641px;top:707.5px;width:2px;height:2px;background:#ababab;"></div>
<div style="left:659px;top:698px;width:14px;height:15px;background:#fff;border:1px solid #ababab"></div>
<svg style="left:663.5px;top:702px" width="4" height="7" viewBox="0 0 4 7"><path d="M4 0V7L0 3.5Z" fill="#555"/></svg>
<div style="left:672px;top:698px;width:334px;height:15px;background:#fff;border:1px solid #ababab"></div>
<div style="left:1007px;top:698px;width:25px;height:15px;background:#dadada;"></div>
<div style="left:1034px;top:698px;width:15px;height:15px;background:#fff;border:1px solid #ababab"></div>
<svg style="left:1040px;top:702px" width="4" height="7" viewBox="0 0 4 7"><path d="M0 0V7L4 3.5Z" fill="#555"/></svg>
<div style="left:1px;top:720px;width:1066px;height:21px;background:#f1f1f1;"></div>
<div style="left:9.8px;top:722px;color:#444;font-size:12px;line-height:16px;transform-origin:0 0;transform:scaleX(0.9622);">準備完了</div>
<div style="left:72.4px;top:722px;color:#444;font-size:12px;line-height:16px;transform-origin:0 0;transform:scaleX(0.8533);">24</div>
<div style="left:90.4px;top:722px;color:#444;font-size:12px;line-height:16px;transform-origin:0 0;transform:scaleX(0.7715);">レコード中</div>
<div style="left:142.4px;top:722px;color:#444;font-size:12px;line-height:16px;transform-origin:0 0;transform:scaleX(0.6879);">1</div>
<div style="left:152.4px;top:722px;color:#444;font-size:12px;line-height:16px;transform-origin:0 0;transform:scaleX(0.8110);">個が見つかりました</div>
<svg style="left:260.5px;top:724px" width="11" height="11" viewBox="0 0 11 11"><circle cx="2.5" cy="2.5" r="2.5" fill="#555"/><rect x="6" y="0.5" width="5" height="3" fill="#555"/><rect x="0.5" y="5.5" width="10" height="5" fill="none" stroke="#555"/><path d="M0.5 8H10.5M4 5.5V10.5M7.3 5.5V10.5" stroke="#555" stroke-width="0.8"/></svg>
<div style="left:765px;top:720px;width:38px;height:20px;background:#c8c8c8;"></div>
<svg style="left:776.5px;top:723.5px" width="13" height="12" viewBox="0 0 13 12"><rect x="0.5" y="0.5" width="12" height="11" fill="none" stroke="#666"/><path d="M0.5 4.2H12.5M0.5 7.8H12.5M4.5 0.5V11.5M8.5 0.5V11.5" stroke="#666"/></svg>
<svg style="left:815.5px;top:723.5px" width="13" height="12" viewBox="0 0 13 12"><rect x="0.5" y="0.5" width="12" height="11" fill="none" stroke="#666"/><rect x="3.5" y="3" width="6" height="6.5" fill="none" stroke="#666"/><path d="M5 5H8M5 7H8" stroke="#666" stroke-width="0.8"/></svg>
<svg style="left:853.5px;top:723.5px" width="13" height="12" viewBox="0 0 13 12"><rect x="0.5" y="0.5" width="12" height="11" fill="none" stroke="#666"/><path d="M4.5 0.5V6.5H8.5V0.5M0.5 6.5H12.5" fill="none" stroke="#666"/></svg>
<div style="left:884px;top:729px;width:6px;height:2px;background:#555;"></div>
<div style="left:895px;top:729.5px;width:98px;height:1px;background:#999;"></div>
<div style="left:942px;top:724px;width:4px;height:12px;background:#555;"></div>
<div style="left:997px;top:729px;width:8px;height:2px;background:#555;"></div>
<div style="left:1000px;top:726px;width:2px;height:8px;background:#555;"></div>
<div style="left:1017px;top:721.5px;color:#444;font-size:12px;line-height:16px;transform-origin:0 0;transform:scaleX(1.0097);">100%</div>
<div style="left:121px;top:246px;width:269px;height:405px;background:#fff;border:1px solid #c6c6c6;border-top:1px solid #d6d6d6;border-right:2px solid #c6c6c6"></div>
<div style="left:127.7px;top:250.3px;font-size:9.5px;line-height:8px;font-weight:bold;color:#3b78c0">A</div>
<div style="left:127.7px;top:258.4px;font-size:9.5px;line-height:8px;font-weight:bold;color:#8e4ab0">Z</div>
<svg style="left:135.5px;top:251px" width="6" height="15" viewBox="0 0 6 15"><path d="M3 0V14.3M0.4 11.6L3 14.3L5.6 11.6" fill="none" stroke="#666" stroke-width="1"/></svg>
<div style="left:127.7px;top:274.3px;font-size:9.5px;line-height:8px;font-weight:bold;color:#8e4ab0">Z</div>
<div style="left:127.7px;top:282.4px;font-size:9.5px;line-height:8px;font-weight:bold;color:#3b78c0">A</div>
<svg style="left:135.5px;top:275px" width="6" height="15" viewBox="0 0 6 15"><path d="M3 0V14.3M0.4 11.6L3 14.3L5.6 11.6" fill="none" stroke="#666" stroke-width="1"/></svg>
<div style="left:154px;top:251px;color:#444;font-size:12px;line-height:16px;transform-origin:0 0;transform:scaleX(1.0246);">昇順(<u>S</u>)</div>
<div style="left:154px;top:275px;color:#444;font-size:12px;line-height:16px;transform-origin:0 0;transform:scaleX(1.0207);">降順(<u>O</u>)</div>
<div style="left:154px;top:299px;color:#444;font-size:12px;line-height:16px;transform-origin:0 0;transform:scaleX(0.9388);">色で並べ替え(<u>T</u>)</div>
<svg style="left:375px;top:303.5px" width="4" height="7" viewBox="0 0 4 7"><path d="M0 0V7L4 3.5Z" fill="#666"/></svg>
<div style="left:154px;top:319px;width:234px;height:1px;background:#e1e1e1;"></div>
<div style="left:122px;top:321px;width:267px;height:24px;background:#c6c6c6;"></div>
<svg style="left:126.5px;top:326px" width="16" height="15" viewBox="0 0 16 15"><path d="M0 0H11L6.6 4.6V10.5H4.4V4.6Z" fill="#6a6a6a"/><path d="M6.5 8L15 15M15 8L6.5 15" stroke="#d9482b" stroke-width="1.5"/></svg>
<div style="left:154.6px;top:325px;color:#262626;font-size:12px;line-height:16px;transform-origin:0 0;transform:scaleX(0.8074);">"反対" からフィルターをクリア(<u>C</u>)</div>
<div style="left:124px;top:347px;width:20px;height:20px;background:#c6c6c6;border:1px solid #8a8a8a"></div>
<svg style="left:129px;top:352.5px" width="10" height="8" viewBox="0 0 10 8"><path d="M0.7 4L3.7 7L9.3 0.8" fill="none" stroke="#444" stroke-width="1.5"/></svg>
<div style="left:154px;top:349px;color:#444;font-size:12px;line-height:16px;transform-origin:0 0;transform:scaleX(0.8375);">色フィルター(<u>I</u>)</div>
<svg style="left:375px;top:353px" width="4" height="7" viewBox="0 0 4 7"><path d="M0 0V7L4 3.5Z" fill="#666"/></svg>
<div style="left:154px;top:373px;color:#444;font-size:12px;line-height:16px;transform-origin:0 0;transform:scaleX(0.8375);">数値フィルター(<u>F</u>)</div>
<svg style="left:375px;top:377px" width="4" height="7" viewBox="0 0 4 7"><path d="M0 0V7L4 3.5Z" fill="#666"/></svg>
<div style="left:154px;top:393px;width:234px;height:1px;background:#e1e1e1;"></div>
<div style="left:152px;top:399px;width:230px;height:21px;background:#fff;border:1px solid #8d8d8d"></div>
<div style="left:154px;top:401px;color:#767676;font-size:12px;line-height:16px;transform-origin:0 0;transform:scaleX(1.0077);">検索</div>
<svg style="left:366px;top:403.5px" width="14" height="12" viewBox="0 0 14 12"><circle cx="8.6" cy="4.6" r="3.8" fill="none" stroke="#3b6eb0" stroke-width="1.6"/><path d="M5.8 7.4L1 11.5" stroke="#3b6eb0" stroke-width="2.2" stroke-linecap="round"/></svg>
<div style="left:152px;top:424px;width:230px;height:168px;background:#fff;border:1px solid #dbe3e8"></div>
<div style="left:165px;top:435px;width:1px;height:156px;background:repeating-linear-gradient(#777 0 1px,transparent 1px 2px)"></div>
<div style="left:166px;top:434px;width:9px;height:1px;background:repeating-linear-gradient(90deg,#777 0 1px,transparent 1px 2px)"></div>
<div style="left:175px;top:428px;width:11px;height:11px;background:#fff;border:1px solid #333"></div>
<div style="left:189px;top:425.5px;color:#1a1a1a;font-size:12px;line-height:16px;font-family:'Liberation Sans','IPAGothic','Noto Sans CJK JP',sans-serif;transform-origin:0 0;transform:scaleX(1.0118);">(すべて選択)</div>
<div style="left:166px;top:452px;width:9px;height:1px;background:repeating-linear-gradient(90deg,#777 0 1px,transparent 1px 2px)"></div>
<div style="left:175px;top:446px;width:11px;height:11px;background:#fff;border:1px solid #333"></div>
<div style="left:189px;top:443.5px;color:#1a1a1a;font-size:12px;line-height:16px;transform-origin:0 0;transform:scaleX(1.0135);">12,189</div>
<div style="left:166px;top:470px;width:9px;height:1px;background:repeating-linear-gradient(90deg,#777 0 1px,transparent 1px 2px)"></div>
<div style="left:175px;top:464px;width:11px;height:11px;background:#fff;border:1px solid #333"></div>
<div style="left:189px;top:461.5px;color:#1a1a1a;font-size:12px;line-height:16px;transform-origin:0 0;transform:scaleX(1.0135);">17,267</div>
<div style="left:166px;top:488px;width:9px;height:1px;background:repeating-linear-gradient(90deg,#777 0 1px,transparent 1px 2px)"></div>
<div style="left:175px;top:482px;width:11px;height:11px;background:#fff;border:1px solid #333"></div>
<div style="left:189px;top:479.5px;color:#1a1a1a;font-size:12px;line-height:16px;transform-origin:0 0;transform:scaleX(1.0135);">18,872</div>
<div style="left:166px;top:506px;width:9px;height:1px;background:repeating-linear-gradient(90deg,#777 0 1px,transparent 1px 2px)"></div>
<div style="left:175px;top:500px;width:11px;height:11px;background:#fff;border:1px solid #333"></div>
<div style="left:189px;top:497.5px;color:#1a1a1a;font-size:12px;line-height:16px;transform-origin:0 0;transform:scaleX(1.0135);">19,160</div>
<div style="left:166px;top:524px;width:9px;height:1px;background:repeating-linear-gradient(90deg,#777 0 1px,transparent 1px 2px)"></div>
<div style="left:175px;top:518px;width:11px;height:11px;background:#fff;border:1px solid #333"></div>
<div style="left:189px;top:515.5px;color:#1a1a1a;font-size:12px;line-height:16px;transform-origin:0 0;transform:scaleX(1.0135);">20,657</div>
<div style="left:166px;top:542px;width:9px;height:1px;background:repeating-linear-gradient(90deg,#777 0 1px,transparent 1px 2px)"></div>
<div style="left:175px;top:536px;width:11px;height:11px;background:#fff;border:1px solid #333"></div>
<div style="left:189px;top:533.5px;color:#1a1a1a;font-size:12px;line-height:16px;transform-origin:0 0;transform:scaleX(1.0135);">20,667</div>
<div style="left:166px;top:560px;width:9px;height:1px;background:repeating-linear-gradient(90deg,#777 0 1px,transparent 1px 2px)"></div>
<div style="left:175px;top:554px;width:11px;height:11px;background:#fff;border:1px solid #333"></div>
<div style="left:189px;top:551.5px;color:#1a1a1a;font-size:12px;line-height:16px;transform-origin:0 0;transform:scaleX(1.0135);">20,815</div>
<div style="left:166px;top:578px;width:9px;height:1px;background:repeating-linear-gradient(90deg,#777 0 1px,transparent 1px 2px)"></div>
<div style="left:175px;top:572px;width:11px;height:11px;background:#fff;border:1px solid #333"></div>
<div style="left:189px;top:569.5px;color:#1a1a1a;font-size:12px;line-height:16px;transform-origin:0 0;transform:scaleX(1.0387);">21,211</div>
<div style="left:175px;top:590px;width:11px;height:1px;background:#333;"></div>
<div style="left:364px;top:425px;width:17px;height:166px;background:#f0f0f0;"></div>
<svg style="left:368px;top:431px" width="9" height="6" viewBox="0 0 9 6"><path d="M1 5L4.5 1.5L8 5" fill="none" stroke="#444" stroke-width="1.8"/></svg>
<div style="left:364px;top:442px;width:16px;height:48px;background:#c9c9c9;"></div>
<svg style="left:368px;top:580px" width="9" height="6" viewBox="0 0 9 6"><path d="M1 1L4.5 4.5L8 1" fill="none" stroke="#444" stroke-width="1.8"/></svg>
<div style="left:224px;top:611px;width:73px;height:23px;background:#e1e1e1;border:1px solid #adadad"></div>
<div style="left:252px;top:614.5px;color:#8a8a8a;font-size:12px;line-height:16px;transform-origin:0 0;transform:scaleX(0.9686);">OK</div>
<div style="left:308px;top:611px;width:73px;height:23px;background:#e1e1e1;border:1px solid #adadad"></div>
<div style="left:320.7px;top:614.5px;color:#111;font-size:12px;line-height:16px;transform-origin:0 0;transform:scaleX(0.7848);">キャンセル</div>
<div style="left:122px;top:639px;width:266px;height:1px;background:#dbe3e8;"></div>
<div style="left:122px;top:640px;width:266px;height:10px;background:linear-gradient(#fff,#ececec)"></div>
<div style="left:383px;top:642.5px;width:2px;height:2px;background:#8a8a8a;"></div>
<div style="left:380px;top:645.5px;width:2px;height:2px;background:#8a8a8a;"></div>
<div style="left:383px;top:645.5px;width:2px;height:2px;background:#8a8a8a;"></div>
<div style="left:389px;top:229px;width:1px;height:36px;background:#8ea9db;"></div>
<div style="left:389px;top:246px;width:2px;height:2px;background:#217346;"></div>
<svg style="left:357.5px;top:332px" width="13" height="20" viewBox="0 0 13 20"><path d="M0.6 0.8V16.2L4.2 12.8L6.9 18.9L9.2 17.9L6.6 12H11.6Z" fill="#fff" stroke="#000" stroke-width="1" stroke-linejoin="miter"/></svg>
<div style="left:1px;top:66px;width:61px;height:1px;background:#fcfafb;"></div>
<div style="left:119px;top:66px;width:948px;height:1px;background:#fcfafb;"></div>
<div style="left:1px;top:66px;width:1px;height:675px;background:#fcfafb;"></div>
<div style="left:1067px;top:66px;width:1px;height:675px;background:#fcfafb;"></div>
<div style="left:1px;top:740px;width:1067px;height:1px;background:#fcfafb;"></div>
<div style="left:0px;top:65px;width:62px;height:1px;background:#176d3e;"></div>
<div style="left:119px;top:65px;width:380px;height:1px;background:#176d3e;"></div>
<div style="left:582px;top:65px;width:487px;height:1px;background:#176d3e;"></div>
<div style="left:0px;top:0px;width:1px;height:742px;background:#0f6b3b;"></div>
<div style="left:1068px;top:0px;width:1px;height:742px;background:#0f6b3b;"></div>
<div style="left:0px;top:741px;width:1069px;height:1px;background:#0f6b3b;"></div>
</body></html>
